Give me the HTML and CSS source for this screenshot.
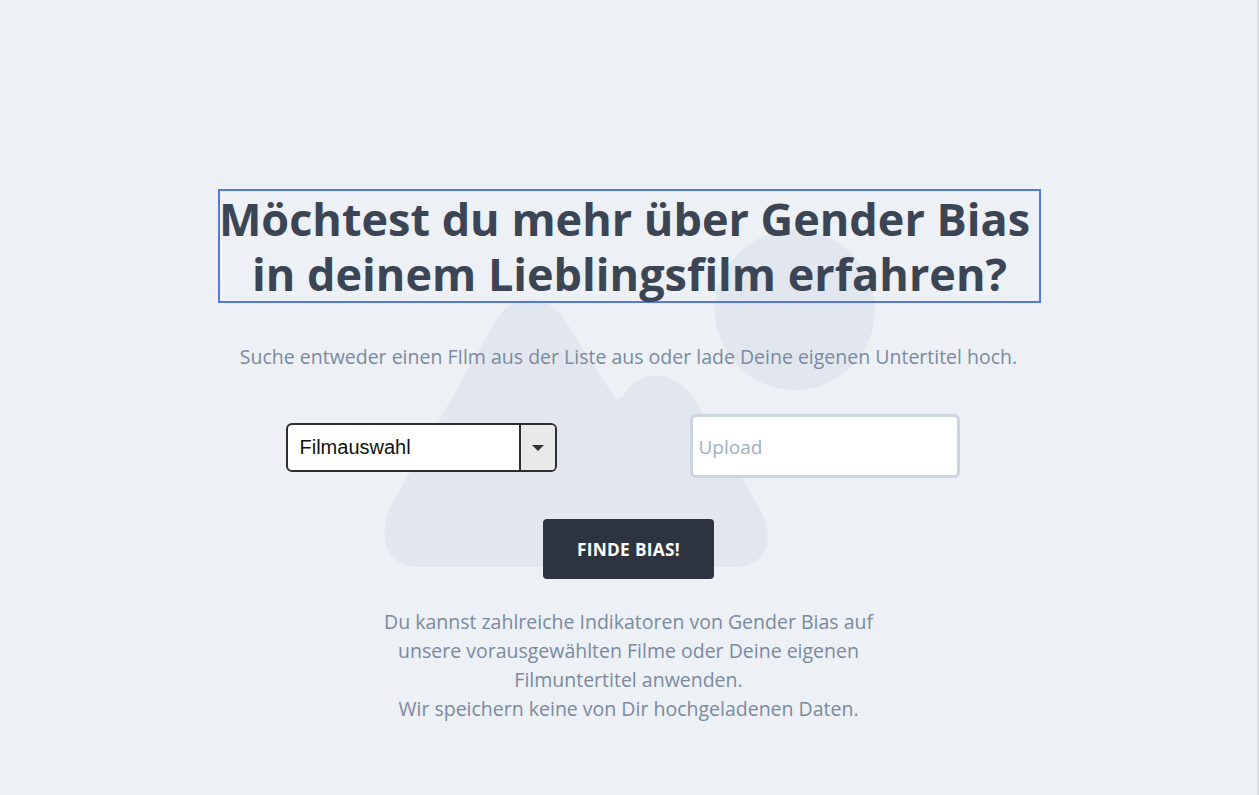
FILE: index.html
```html
<!DOCTYPE html>
<html lang="de">
<head>
<meta charset="utf-8">
<title>Gender Bias</title>
<link rel="stylesheet" href="styles.css">
</head>
<body>
<div class="page">
  <svg class="backdrop" width="1259" height="795" viewBox="0 0 1259 795" aria-hidden="true">
    <path d="M420 567 C385 567 375 535 394 500 L495 322 C512 292 548 292 566 322 L613 395 C616 400 619 400 623 396 C640 368 672 370 692 395 L758 505 C778 540 765 567 735 567 Z" fill="#e2e7ef"/>
    <circle cx="795" cy="310" r="80" fill="#e2e7ef"/>
  </svg>
  <main class="hero">
    <h1 class="title">Möchtest du mehr über Gender Bias in deinem Lieblingsfilm erfahren?</h1>
    <p class="lead">Suche entweder einen FIlm aus der Liste aus oder lade Deine eigenen Untertitel hoch.</p>
    <div class="controls">
      <div class="select">
        <span class="select-label">Filmauswahl</span>
        <span class="select-btn"><span class="caret"></span></span>
      </div>
      <input class="upload" type="text" placeholder="Upload">
    </div>
    <button class="cta" type="button">FINDE BIAS!</button>
    <p class="note">Du kannst zahlreiche Indikatoren von Gender Bias auf unsere vorausgewählten Filme oder Deine eigenen Filmuntertitel anwenden.<br>Wir speichern keine von Dir hochgeladenen Daten.</p>
  </main>
</div>
</body>
</html>
```

FILE: styles.css
```css
html, body {
  margin: 0;
  padding: 0;
}
body {
  background: #edf0f5;
  font-family: "Open Sans", "Noto Sans", sans-serif;
}
.page {
  position: relative;
  width: 1259px;
  height: 795px;
  box-sizing: border-box;
  border-right: 2px solid #dcdfe4;
  overflow: hidden;
}
.backdrop {
  position: absolute;
  left: 0;
  top: 0;
  z-index: 0;
}
.hero {
  position: relative;
  z-index: 1;
  display: flex;
  flex-direction: column;
  align-items: center;
  padding-top: 189px;
}
.title {
  box-sizing: border-box;
  width: 823px;
  margin: 0;
  margin-left: 2px;
  border: 2px solid #5677e6;
  font-size: 45px;
  line-height: 55px;
  font-weight: 700;
  color: #3b4554;
  text-align: center;
  text-indent: -10px;
}
.lead {
  margin: 40px 0 0;
  font-size: 19.5px;
  line-height: 27px;
  color: #7a8aa0;
  text-align: center;
}
.controls {
  display: flex;
  align-items: center;
  gap: 133px;
  margin-top: 44px;
  margin-right: 12px;
}
.select {
  box-sizing: border-box;
  width: 271px;
  height: 49px;
  display: flex;
  border: 2px solid #2e2e2e;
  border-radius: 6px;
  background: #fff;
  overflow: hidden;
  margin-top: 3px;
}
.select-label {
  flex: 1;
  display: flex;
  align-items: center;
  padding-left: 12px;
  font-family: "Liberation Sans", Arial, sans-serif;
  font-size: 20px;
  color: #111;
}
.select-btn {
  width: 34px;
  display: flex;
  align-items: center;
  justify-content: center;
  background: #e9e9e9;
  border-left: 2px solid #2e2e2e;
}
.caret {
  width: 0;
  height: 0;
  margin-top: 1px;
  border-left: 6px solid transparent;
  border-right: 6px solid transparent;
  border-top: 6px solid #333;
}
.upload {
  box-sizing: border-box;
  width: 270px;
  height: 64px;
  margin: 0;
  padding: 2px 0 0 6px;
  border: 3px solid #cbd5e0;
  border-radius: 6px;
  background: #fff;
  font-family: "Open Sans", sans-serif;
  font-size: 19px;
  color: #2d3748;
  outline: none;
}
.upload::placeholder {
  color: #a0b0c2;
}
.cta {
  margin-top: 41px;
  width: 171px;
  height: 60px;
  border: none;
  border-radius: 4px;
  background: #2d3440;
  color: #fff;
  font-family: "Open Sans", sans-serif;
  font-weight: 700;
  font-size: 17.3px;
  letter-spacing: 0.3px;
  cursor: pointer;
}
.note {
  margin: 28px 0 0;
  max-width: 530px;
  font-size: 19.5px;
  line-height: 29px;
  color: #7a8aa0;
  text-align: center;
}
```
